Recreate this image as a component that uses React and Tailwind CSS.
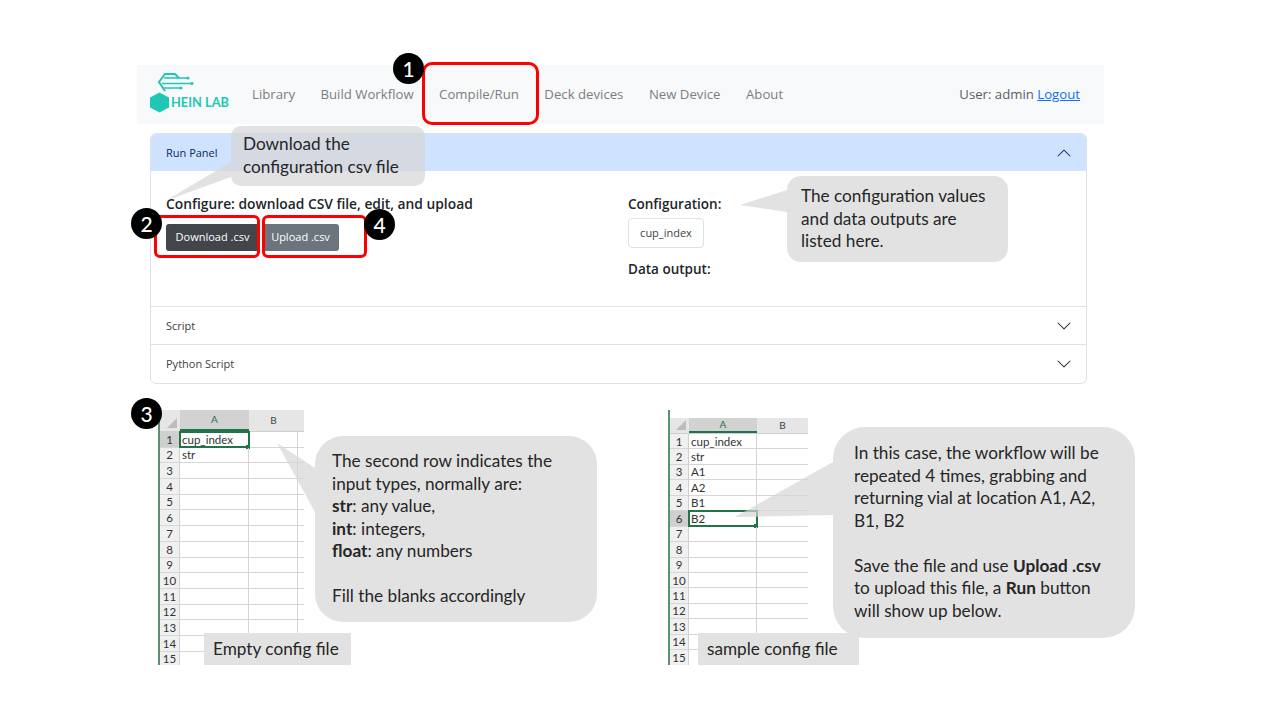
const NAV_LINKS = ['Library', 'Build Workflow', 'Compile/Run', 'Deck devices', 'New Device', 'About']
const ROW_NUMBERS = [1, 2, 3, 4, 5, 6, 7, 8, 9, 10, 11, 12, 13, 14, 15]

function Logo() {
  return (
    <div className="relative w-[80px] h-[44px] shrink-0">
      <svg className="absolute left-0 top-0" width="80" height="44" viewBox="0 0 80 44" fill="none">
        <polygon points="9.5,19.5 19,24.5 19,34.5 9.5,39.5 0,34.5 0,24.5" fill="#1ec8b4" />
        <path d="M15 18 L9 9 L15 1 L25 1 L29 5" stroke="#1ec8b4" strokeWidth="2" />
        <path d="M14 5 H38 M12 10.5 H42 M14 15 H31" stroke="#1ec8b4" strokeWidth="1.4" />
        <circle cx="38" cy="5" r="1.5" fill="#1ec8b4" />
        <circle cx="42" cy="10.5" r="1.5" fill="#1ec8b4" />
        <circle cx="31" cy="15" r="1.5" fill="#1ec8b4" />
      </svg>
      <span className="absolute left-[21px] top-[22px] text-[12.8px] leading-[14px] font-bold text-[#1ec8b4] whitespace-nowrap font-['Lato',sans-serif]">HEIN LAB</span>
    </div>
  )
}

function Chevron({ up }) {
  return (
    <svg className={up ? 'rotate-180' : ''} width="16" height="16" viewBox="0 0 16 16" fill={up ? '#052c65' : '#212529'}>
      <path fillRule="evenodd" d="M1.646 4.646a.5.5 0 0 1 .708 0L8 10.293l5.646-5.647a.5.5 0 0 1 .708.708l-6 6a.5.5 0 0 1-.708 0l-6-6a.5.5 0 0 1 0-.708z" />
    </svg>
  )
}

function Navbar() {
  return (
    <nav className="w-[967px] h-[59px] bg-[#f8f9fa] flex items-center pl-[13px] pr-[24px]">
      <Logo />
      <div className="flex gap-[25.5px] ml-[22px] text-[13.2px] text-[#7c7d7e]">
        {NAV_LINKS.map(link => <span key={link}>{link}</span>)}
      </div>
      <div className="ml-auto text-[13.2px] text-[#5c5e60]">
        User: admin <span className="text-[#0d6efd] underline">Logout</span>
      </div>
    </nav>
  )
}

function AccordionRow({ label }) {
  return (
    <div className="h-[38px] border-t border-[#dee2e6] flex items-center justify-between pl-[15px] pr-[14px] text-[11px] text-[#3d4246]">
      <span className="pt-[2px]">{label}</span>
      <Chevron />
    </div>
  )
}

function RunPanel() {
  return (
    <div className="ml-[13px] mt-[9px] w-[937px] h-[251px] border border-[#dee2e6] rounded-[6px] overflow-hidden bg-white">
      <div className="h-[37px] bg-[#cfe2ff] flex items-center justify-between pl-[15px] pr-[14px] text-[11px] text-[#052c65]">
        <span className="pt-[2px]">Run Panel</span>
        <Chevron up />
      </div>
      <div className="h-[135px] flex pl-[15px]">
        <div className="w-[462px] pt-[23px]">
          <h5 className="text-[13.8px] leading-[20px] font-semibold text-[#212529]">Configure: download CSV file, edit, and upload</h5>
          <div className="flex gap-[3px] mt-[10px]">
            <button className="h-[27px] w-[93px] rounded-[3px] bg-[#42464a] text-white text-[11px]">Download .csv</button>
            <button className="h-[27px] w-[77px] rounded-[3px] bg-[#6c757d] text-white text-[11px]">Upload .csv</button>
          </div>
        </div>
        <div className="pt-[23px]">
          <h5 className="text-[13.5px] leading-[20px] font-semibold text-[#212529]">Configuration:</h5>
          <div className="mt-[4px] w-[76px] h-[30px] border border-[#dee2e6] rounded-[4px] flex items-center justify-center text-[11px] text-[#3d4246]">cup_index</div>
          <h5 className="mt-[11px] text-[13.5px] leading-[20px] font-semibold text-[#212529]">Data output:</h5>
        </div>
      </div>
      <AccordionRow label="Script" />
      <AccordionRow label="Python Script" />
    </div>
  )
}

function Sheet({ cells, selected, headerClass, rowHeight, colWidths }) {
  const [rowCol, colA, colB, rest] = colWidths
  return (
    <div className="h-[255px] border-l-2 border-[#5e8f74] overflow-hidden font-['Lato',sans-serif]" style={{ width: rowCol + colA + colB + rest + 2 }}>
      <div className={`flex bg-[#e6e6e6] border-b border-[#cfcfcf] text-[10px] text-[#444] ${headerClass}`}>
        <div className="flex items-end justify-end pr-[3px] pb-[3px]" style={{ width: rowCol }}>
          <svg width="10" height="10" viewBox="0 0 10 10"><polygon points="10,0 10,10 0,10" fill="#bdbdbd" /></svg>
        </div>
        <div className="flex items-center justify-center border-b-2 border-[#21734a] bg-[#d2d2d2] text-[#21734a]" style={{ width: colA }}>A</div>
        <div className="flex items-center justify-center" style={{ width: colB }}>B</div>
      </div>
      {ROW_NUMBERS.map((n, i) => (
        <div key={n} className="flex border-b border-[#d6d6d6] text-[11.5px] text-[#333]" style={{ height: rowHeight }}>
          <div className={`flex items-center justify-center border-r border-[#cfcfcf] ${n === selected ? 'bg-[#cfcfcf]' : 'bg-[#f0f0f0]'}`} style={{ width: rowCol }}>{n}</div>
          <div className={`relative flex items-center pl-[2px] border-r border-[#d6d6d6] ${n === selected ? 'outline-2 -outline-offset-1 outline-[#21734a]' : ''}`} style={{ width: colA }}>
            {cells[i]}
            {n === selected && <span className="absolute -right-[2px] -bottom-[2px] w-[4px] h-[4px] bg-[#21734a]" />}
          </div>
          {rest > 0 && <div className="border-r border-[#d6d6d6]" style={{ width: colB }} />}
        </div>
      ))}
    </div>
  )
}

function Callout({ className, tail, children }) {
  return (
    <>
      <svg className="absolute left-0 top-0 pointer-events-none" width="1280" height="720" viewBox="0 0 1280 720">
        <polygon points={tail} fill="#d5d5d5" fillOpacity="0.7" />
      </svg>
      <div className={`absolute bg-[#d5d5d5]/70 text-[17.2px] leading-[22.5px] text-[#262626] font-['Lato',sans-serif] ${className}`}>
        {children}
      </div>
    </>
  )
}

function Badge({ className, children }) {
  return (
    <div className={`absolute w-[31px] h-[31px] rounded-full bg-black text-white flex items-center justify-center text-[21px] font-medium font-['Lato',sans-serif] ${className}`}>
      {children}
    </div>
  )
}

export default function App() {
  return (
    <div className="relative w-[1280px] h-[720px] overflow-hidden bg-white pt-[65px] pl-[137px] font-['Open_Sans',sans-serif]">
      <Navbar />
      <RunPanel />

      <div className="flex mt-[26px] ml-[21px]">
        <Sheet cells={['cup_index', 'str']} selected={1} headerClass="h-[22px]" rowHeight="15.7px" colWidths={[20, 69, 49, 6]} />
        <div className="ml-[364px]">
          <Sheet cells={['cup_index', 'str', 'A1', 'A2', 'B1', 'B2']} selected={6} headerClass="h-[16px] mt-[8px]" rowHeight="15.45px" colWidths={[19, 68, 51, 0]} />
        </div>
      </div>

      <Callout
        className="left-[231px] top-[126px] w-[194px] h-[60px] rounded-[10px] pl-[12px] pt-[7px]"
        tail="165,201 231,162 231,177"
      >
        Download the<br />configuration csv file
      </Callout>
      <Callout
        className="left-[787px] top-[176px] w-[221px] h-[86px] rounded-[14px] pl-[14px] pt-[9px]"
        tail="740,205 787,190 787,212"
      >
        The configuration values<br />and data outputs are<br />listed here.
      </Callout>
      <Callout
        className="left-[315px] top-[436px] w-[282px] h-[186px] rounded-[28px] pl-[17px] pt-[14px]"
        tail="277,443 315,468 315,512"
      >
        The second row indicates the<br />input types, normally are:<br />
        <b>str</b>: any value,<br /><b>int</b>: integers,<br /><b>float</b>: any numbers<br /><br />Fill the blanks accordingly
      </Callout>
      <Callout
        className="left-[833px] top-[427px] w-[302px] h-[211px] rounded-[32px] pl-[21px] pt-[15px]"
        tail="735,517 833,462 833,515"
      >
        In this case, the workflow will be<br />repeated 4 times, grabbing and<br />returning vial at location A1, A2,<br />B1, B2<br /><br />
        Save the file and use <b>Upload .csv</b><br />to upload this file, a <b>Run</b> button<br />will show up below.
      </Callout>

      <div className="absolute left-[204px] top-[633px] w-[147px] h-[32px] bg-[#e2e2e2] pl-[9px] flex items-center text-[17.2px] text-[#262626] font-['Lato',sans-serif]">Empty config file</div>
      <div className="absolute left-[698px] top-[633px] w-[161px] h-[32px] bg-[#e2e2e2] pl-[9px] flex items-center text-[17.2px] text-[#262626] font-['Lato',sans-serif]">sample config file</div>

      <div className="absolute left-[422px] top-[62px] w-[117px] h-[63px] border-[3px] border-[#ff0000] rounded-[10px]" />
      <div className="absolute left-[154px] top-[215px] w-[106px] h-[43px] border-[3px] border-[#ff0000] rounded-[6px]" />
      <div className="absolute left-[262px] top-[215px] w-[105px] h-[43px] border-[3px] border-[#ff0000] rounded-[6px]" />

      <Badge className="left-[393px] top-[53px]">1</Badge>
      <Badge className="left-[131px] top-[208px]">2</Badge>
      <Badge className="left-[131px] top-[398px]">3</Badge>
      <Badge className="left-[364px] top-[209px]">4</Badge>
    </div>
  )
}
